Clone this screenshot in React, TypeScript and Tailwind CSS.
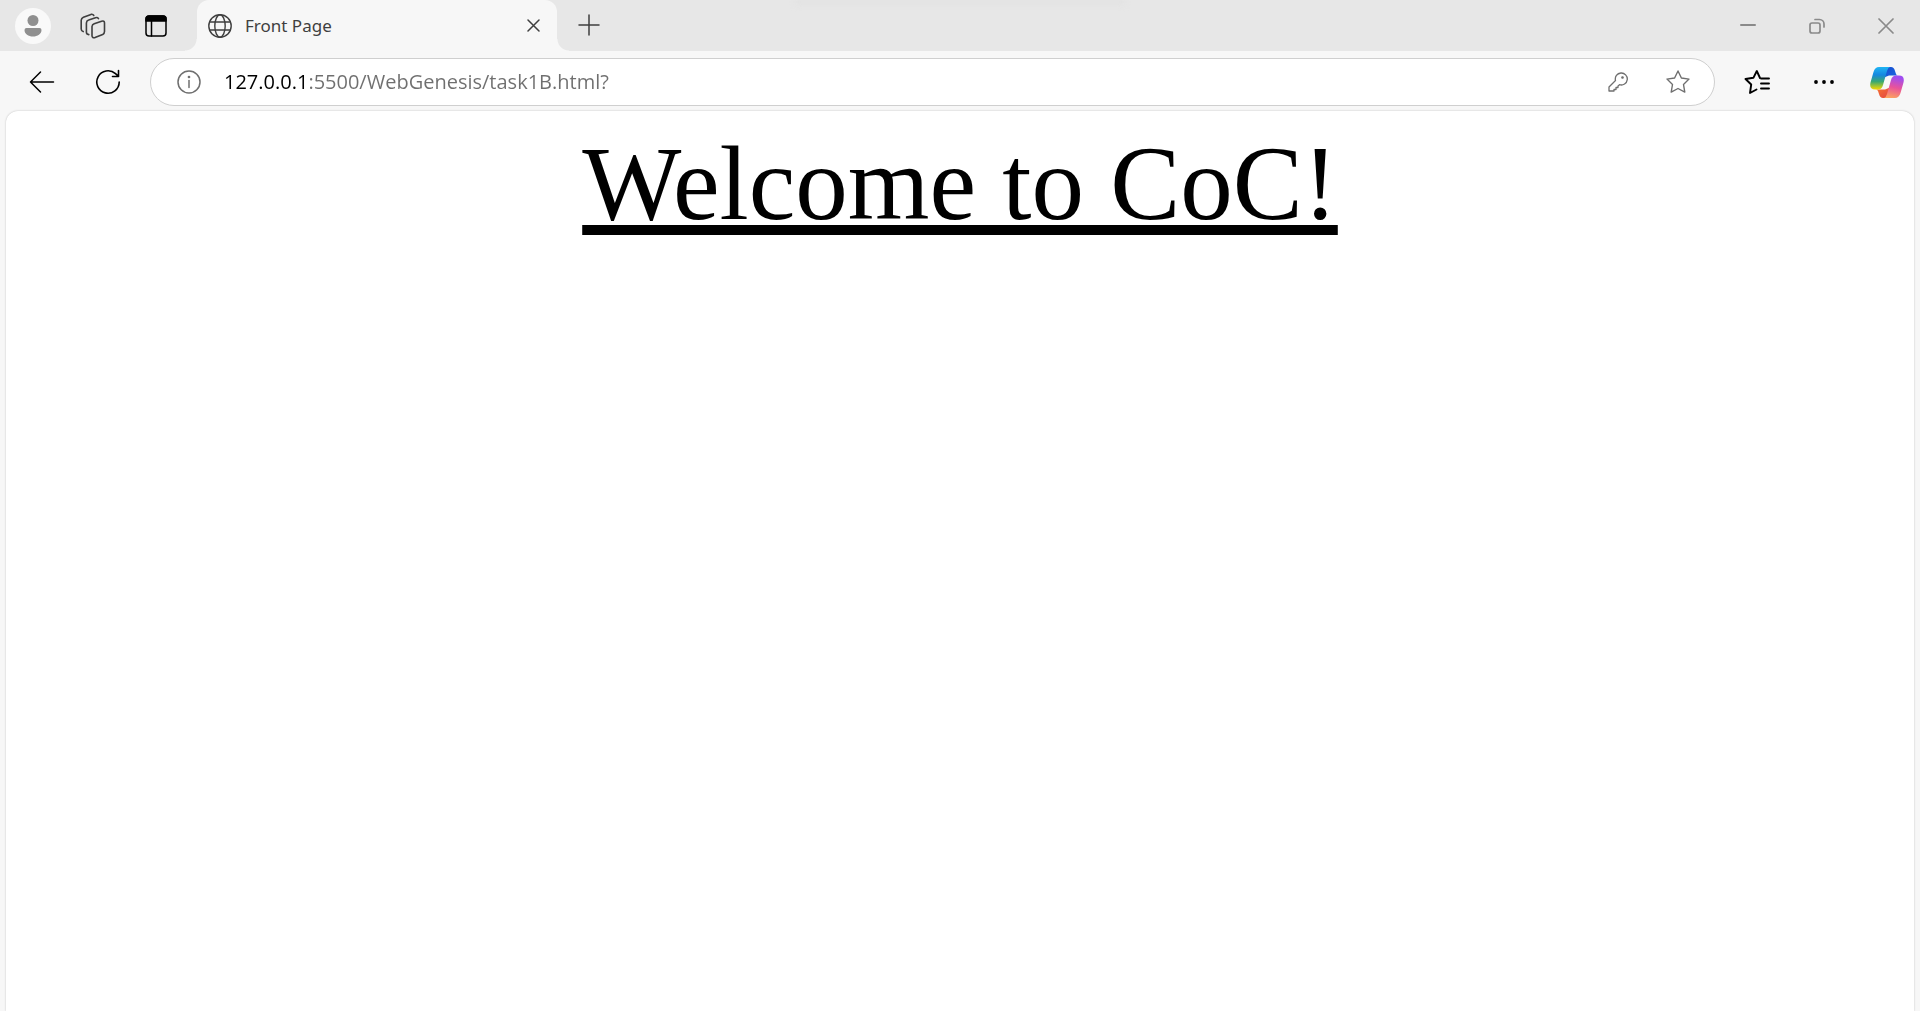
import React from 'react';

type IconProps = { children: React.ReactNode; size: string; box: string; stroke?: number };

function Icon({ children, size, box, stroke = 1.5 }: IconProps) {
  return (
    <svg
      aria-hidden="true"
      viewBox={box}
      className={size}
      fill="none"
      stroke="currentColor"
      strokeWidth={stroke}
      strokeLinecap="round"
      strokeLinejoin="round"
    >
      {children}
    </svg>
  );
}

function TabStrip() {
  return (
    <header className="relative flex h-[51px] bg-[#e7e7e7] text-[#3f3f3f]">
      <div className="absolute inset-x-0 top-0 flex h-3 justify-center overflow-hidden">
        <div className="h-1 w-[330px] bg-[#e0e0e0] blur-[3px]" />
      </div>
      <div className="flex w-[197px] shrink-0 items-center pl-[15px]">
        <button aria-label="Profile" className="grid size-9 place-items-center rounded-full bg-[#f9f9f9] text-[#8f8f8f]">
          <svg aria-hidden="true" viewBox="0 0 18 22" className="h-[22px] w-[18px]" fill="currentColor">
            <circle cx="9" cy="5.5" r="5.5" />
            <path d="M2.500 13h13a2 2 0 0 1 2 2c0 4-4 6.500-8.500 6.500S.5 19 .5 15a2 2 0 0 1 2-2z" />
          </svg>
        </button>
        <button aria-label="Workspaces" className="ml-7 grid size-7 place-items-center">
          <Icon size="size-[26px]" box="0 0 26 26" stroke={1.6}>
            <path d="M14.200 10.800 21.600 8.200Q24.300 7.400 24.500 9.800V18.600Q24.500 20.600 22.700 21.500L15 24.600Q12.300 25.200 12 22.800V13.500Q12.200 11.600 14.200 10.800z" />
            <path d="M8.800 21.600Q6.400 21.300 6.400 19.200V10Q6.500 7.800 8.700 7.100L15.500 4.700Q17.600 4.200 18.500 5.600" />
            <path d="M3.200 18.600Q1.200 18 1.200 16V7.200Q1.300 5 3.400 4.200L11 1.400Q13 1 13.800 2.500" />
          </Icon>
        </button>
        <button aria-label="Tab actions" className="ml-[35px] grid size-7 place-items-center text-black">
          <Icon size="size-[22px]" box="0 0 22 22">
            <rect x="1" y="1" width="20" height="20" rx="3" />
            <path d="M1 4a3 3 0 0 1 3-3h14a3 3 0 0 1 3 3v2H1z" fill="currentColor" />
            <path d="M6.500 6v15" />
          </Icon>
        </button>
      </div>
      <div className="relative flex w-[360px] shrink-0 items-center rounded-t-xl bg-[#f7f7f7] pr-4 pl-[11px]">
        <span className="absolute bottom-0 -left-3 size-3 bg-[radial-gradient(circle_at_0_0,#e7e7e7_11px,#f7f7f7_12px)]" />
        <span className="absolute -right-3 bottom-0 size-3 bg-[radial-gradient(circle_at_100%_0,#e7e7e7_11px,#f7f7f7_12px)]" />
        <Icon size="size-6" box="0 0 24 24" stroke={1.4}>
          <circle cx="12" cy="12" r="11.200" />
          <ellipse cx="12" cy="12" rx="5.200" ry="11.200" />
          <path d="M2 8h20M2 16h20" />
        </Icon>
        <span className="ml-[13px] flex-1 text-[17px]">Front Page</span>
        <button aria-label="Close tab" className="grid size-4 place-items-center">
          <Icon size="size-[13px]" box="0 0 13 13">
            <path d="M1 1l11 11M12 1 1 12" />
          </Icon>
        </button>
      </div>
      <button aria-label="New tab" className="ml-5 grid w-6 place-items-center pb-0.5">
        <Icon size="size-[22px]" box="0 0 22 22">
          <path d="M11 1v20M1 11h20" />
        </Icon>
      </button>
      <div className="ml-auto flex text-[#8a8a8a]">
        <button aria-label="Minimize" className="grid w-[69px] place-items-center pb-0.5">
          <Icon size="size-4" box="0 0 16 16" stroke={2}>
            <path d="M1 8h14" />
          </Icon>
        </button>
        <button aria-label="Restore" className="grid w-[69px] place-items-center">
          <Icon size="size-4" box="0 0 16 16" stroke={1.7}>
            <rect x="1" y="5" width="10" height="10" rx="2" />
            <path d="M6 1.500h4.500a4.500 4.500 0 0 1 4.500 4.500v3" />
          </Icon>
        </button>
        <button aria-label="Close" className="grid w-[69px] place-items-center">
          <Icon size="size-4" box="0 0 16 16" stroke={1.7}>
            <path d="M1 1l14 14M15 1 1 15" />
          </Icon>
        </button>
      </div>
    </header>
  );
}

function CopilotLogo() {
  return (
    <svg aria-hidden="true" viewBox="0 0 34 31" className="h-[31px] w-[34px]">
      <defs>
        <linearGradient id="cool" x1="0" y1="0" x2="0" y2="1">
          <stop offset="0" stopColor="#20b5f3" />
          <stop offset="0.350" stopColor="#1587e0" />
          <stop offset="0.650" stopColor="#3aa870" />
          <stop offset="1" stopColor="#f5d800" />
        </linearGradient>
        <linearGradient id="warm" x1="0.200" y1="0" x2="0" y2="1">
          <stop offset="0" stopColor="#a04df0" />
          <stop offset="0.450" stopColor="#e9539a" />
          <stop offset="1" stopColor="#ffad58" />
        </linearGradient>
        <linearGradient id="deep" x1="0" y1="0" x2="1" y2="1">
          <stop offset="0" stopColor="#1a4fd0" />
          <stop offset="1" stopColor="#1766e0" />
        </linearGradient>
        <linearGradient id="ember" x1="0" y1="0" x2="1" y2="1">
          <stop offset="0" stopColor="#f7762f" />
          <stop offset="1" stopColor="#e34444" />
        </linearGradient>
      </defs>
      <path d="M15 0h6q3 0 4 4l1 3q.6 1.500 2 1.500h-9l-5 2z" fill="url(#deep)" />
      <path d="M19 31h-6q-3 0-4-4l-1-3q-.6-1.500-2-1.500h9l5-2z" fill="url(#ember)" />
      <path d="M9 0h11q-2 .5-3 4l-4 14q-1.200 4.500-5 4.500H5q-6 0-4.500-7L3.500 5Q5 0 9 0z" fill="url(#cool)" />
      <path d="M25 31H14q2-.5 3-4l4-14q1.200-4.500 5-4.500h3q6 0 4.500 7L30.500 26Q29 31 25 31z" fill="url(#warm)" />
    </svg>
  );
}

function Toolbar() {
  return (
    <nav className="flex h-[60px] items-center bg-[#f7f7f7] pt-1 pb-0.5 text-black">
      <button aria-label="Back" className="ml-7 grid size-7 place-items-center">
        <Icon size="size-[26px]" box="0 0 26 26">
          <path d="M11.500 3 1.500 13l10 10M1.500 13h23" />
        </Icon>
      </button>
      <button aria-label="Refresh" className="ml-[38px] grid size-7 place-items-center">
        <Icon size="size-[26px]" box="0 0 26 26" stroke={1.6}>
          <path d="M24.200 13A11.200 11.200 0 1 1 20.500 4.700L23.500 7.400M23.500 1.500v6h-6" />
        </Icon>
      </button>
      <div className="ml-[28px] flex h-12 flex-1 items-center rounded-full border border-[#cfcfcf] bg-white pr-6 pl-[26px] text-[#6f6f6f]">
        <button aria-label="View site information">
          <Icon size="size-6" box="0 0 24 24">
            <circle cx="12" cy="12" r="11" />
            <path d="M12 10.500v7" />
            <circle cx="12" cy="7" r="0.600" fill="currentColor" />
          </Icon>
        </button>
        <input
          type="text"
          aria-label="Address"
          defaultValue="127.0.0.1:5500/WebGenesis/task1B.html?"
          className="ml-[23px] min-w-0 flex-1 bg-[linear-gradient(to_right,#000_84px,#6f6f6f_84px)] bg-clip-text font-['Open_Sans',sans-serif] text-[20px] text-transparent outline-none"
        />
        <button aria-label="Saved passwords">
          <Icon size="size-5" box="0 0 20 20" stroke={1.3}>
            <path d="M7.500 8.500a6 6 0 1 1 4 4.200l-1.500 1.300v1.500H8v2H6v1.500H1V15z" />
            <circle cx="14.500" cy="5.500" r="0.700" fill="currentColor" />
          </Icon>
        </button>
        <button aria-label="Add to favorites" className="ml-[38px]">
          <Icon size="size-6" box="0 0 24 24" stroke={1.4}>
            <path d="m12 1 3.400 7 7.600 1.100-5.500 5.400 1.300 7.600L12 18.500l-6.800 3.600 1.300-7.600L1 9.100 8.600 8z" />
          </Icon>
        </button>
      </div>
      <button aria-label="Favorites" className="ml-[29px]">
        <Icon size="size-[26px]" box="0 0 26 26" stroke={1.9}>
          <path d="M17 9.500h8M17 14.500h8M17 19.500h8" />
          <path d="M16 9 12.800 2 9.400 8.800 1.500 10l5.700 5.500L6 24l6.500-3.500" />
        </Icon>
      </button>
      <button aria-label="Settings and more" className="ml-10 grid size-7 place-items-center">
        <svg aria-hidden="true" viewBox="0 0 20 4" className="h-1 w-5" fill="currentColor">
          <circle cx="2" cy="2" r="1.900" />
          <circle cx="10" cy="2" r="1.900" />
          <circle cx="18" cy="2" r="1.900" />
        </svg>
      </button>
      <button aria-label="Copilot" className="mr-4 ml-8">
        <CopilotLogo />
      </button>
    </nav>
  );
}

export default function App() {
  return (
    <div className="flex min-h-screen flex-col bg-[#f7f7f7] font-['Noto_Sans',sans-serif]">
      <TabStrip />
      <Toolbar />
      <main className="mx-1.5 flex-1 rounded-t-xl bg-white pt-[13px] text-center font-['Liberation_Serif',serif] text-black shadow-[0_0_2px_#bbb]">
        <h1 className="text-[105px] leading-[120px] underline decoration-[10px] underline-offset-[6px] [text-decoration-skip-ink:none]">
          Welcome to CoC!
        </h1>
      </main>
    </div>
  );
}
